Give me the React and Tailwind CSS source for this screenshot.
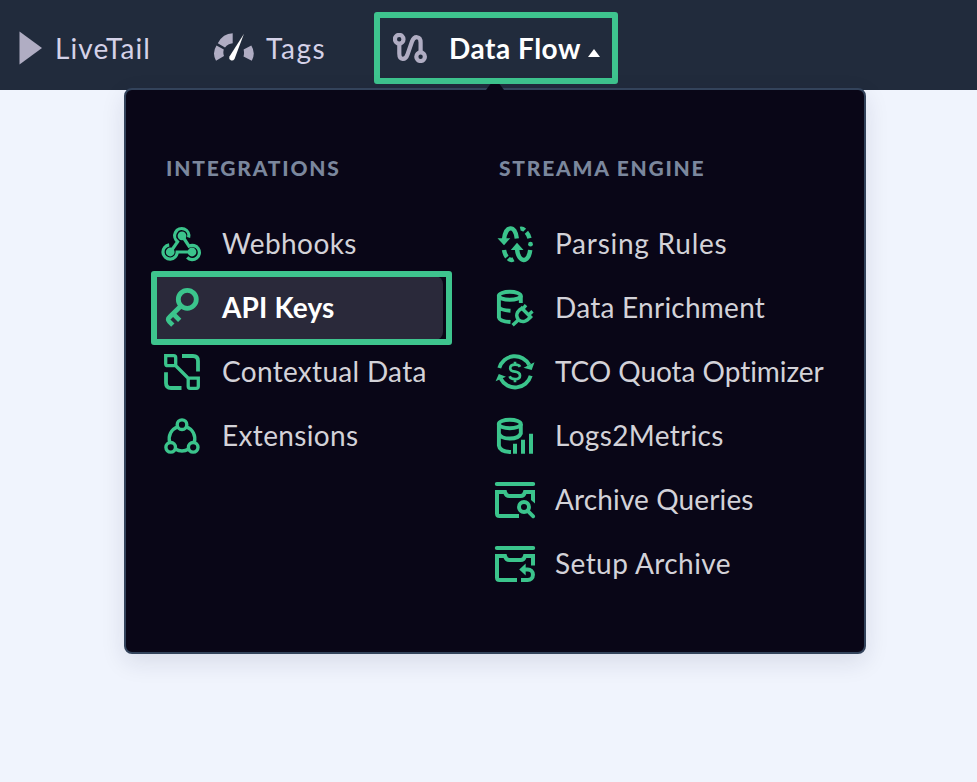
import React from 'react';

function Icon({ children, className = '' }) {
  return (
    <svg
      viewBox="0 0 40 40"
      className={`h-10 w-10 shrink-0 overflow-visible text-[#3bc48c] ${className}`}
      fill="none"
      stroke="currentColor"
      strokeWidth="4"
    >
      {children}
    </svg>
  );
}

const WebhookIcon = () => (
  <Icon>
    <g strokeWidth="3.2">
      <path d="M15.8 17.6A7.1 7.1 0 1 1 26.6 13.5" />
      <path d="M7.2 20.9A7.1 7.1 0 1 0 15.2 28H29" />
      <path d="M20 11.500L27 22.200A7.100 7.100 0 1 1 25.200 33.400" />
      <path d="M16.400 16.600L8.400 28" />
    </g>
    <g fill="currentColor" stroke="none">
      <circle cx="20" cy="11.800" r="4.400" />
      <circle cx="8.200" cy="28" r="4.400" />
      <circle cx="30" cy="28" r="4.400" />
    </g>
  </Icon>
);

const KeyIcon = () => (
  <Icon>
    <circle cx="25.3" cy="11.3" r="9" strokeWidth="4.8" />
    <path d="M18.600 18.200L7.400 29.200Q5 31.400 7.300 33.700L10.800 37.200M11.500 26.200L17.700 32.400" strokeWidth="4.700" />
  </Icon>
);

const ContextIcon = () => (
  <Icon>
    <path
      d="M3.700 3.700H11.700Q13.700 3.700 13.700 5.700V13.700H5.700Q3.700 13.700 3.700 11.700ZM26.200 26.200H36.300V34.300Q36.300 36.300 34.300 36.300H28.200Q26.200 36.300 26.200 34.300ZM13 13L27 27"
      strokeWidth="3.300"
    />
    <path d="M20 4H31Q36 4 36 9V19.500M4 20.300V31Q4 36 9 36H19.500" strokeWidth="3.800" />
  </Icon>
);

const ExtensionsIcon = () => (
  <Icon>
    <g strokeWidth="3.400">
      <circle cx="20" cy="8.700" r="4.800" />
      <circle cx="8.700" cy="31.300" r="4.800" />
      <circle cx="31.200" cy="31.300" r="4.800" />
      <path d="M15.500 10.800A12.800 12.800 0 0 0 7.700 26.300M24.500 10.800A12.800 12.800 0 0 1 32.300 26.300M13.300 33A13 13 0 0 0 26.700 33" />
    </g>
  </Icon>
);

const ParsingIcon = () => (
  <Icon>
    <g strokeWidth="4.400">
      <path d="M9 15.500C10.500 0.800 20.500 0.800 21.800 14.500" />
      <path d="M25.300 4.800Q27.600 4.200 29.600 6.200M31.400 8.300Q33.600 10.800 34.500 14.300" />
      <path d="M9 26Q9.700 30.300 11.900 33.200M13.300 34.500Q15.700 36.800 18.500 35.300" />
      <path d="M22 25C23.300 39.500 33.800 39.500 35.200 26" />
    </g>
    <g fill="currentColor" stroke="none">
      <path d="M2.500 14.200H15.300L9 21.300ZM15.800 25.900L22 18.800L28.500 25.900Z" />
      <circle cx="35.500" cy="20.200" r="2.400" />
    </g>
  </Icon>
);

const EnrichmentIcon = () => (
  <Icon>
    <g strokeWidth="3.900">
      <ellipse cx="14.800" cy="7.800" rx="11" ry="4" />
      <path d="M3.900 7.800V29.500Q4.500 33.300 15.500 34M3.900 19Q5.500 22.300 15.500 22.800M25.800 7.800V15" />
      <path
        d="M25.600 19L36.800 30.200M26.600 20.400C21.300 23.300 20.500 28.300 23.500 31.700C27 35 32.200 33.800 35 28.900M23.300 31.900L17.600 37.300M28.300 20.300L31 17.200M34.300 26.200L37.500 23.300"
        strokeWidth="3.400"
      />
    </g>
  </Icon>
);

const QuotaIcon = () => (
  <Icon>
    <path d="M4.300 16A16.200 16.200 0 0 1 34.300 13M35.700 23.700A16.200 16.200 0 0 1 5.700 26.600" strokeWidth="3.900" />
    <g fill="currentColor" stroke="none">
      <path d="M28.500 15.800L39.500 10.200L36.700 18ZM.600 29.300L3.800 22L11 24.800Z" />
    </g>
    <path
      d="M25 14.800Q24 12.700 20 12.700Q15.200 12.700 15.200 16.200Q15.200 19.100 20 19.700Q25 20.400 25 23.700Q25 27.100 20 27.100Q15.600 27.100 14.600 24.200M20 9.800V13M20 27V30.300"
      strokeWidth="2.700"
    />
  </Icon>
);

const MetricsIcon = () => (
  <Icon>
    <ellipse cx="14.800" cy="8" rx="11" ry="4.200" strokeWidth="3.900" />
    <path d="M3.900 8V29.500Q4.500 35.500 16 36M3.900 17.500Q5.500 22.500 14.800 22.500Q24 22.500 25.800 17.500V8" strokeWidth="3.900" />
    <path d="M20 37.800V27.700M28 37.800V23.700M36 37.800V17.700" />
  </Icon>
);

const ArchiveQueryIcon = () => (
  <Icon>
    <path d="M1.800 4H38.200" strokeLinecap="round" />
    <path d="M38 20V12H30Q28.800 16.700 24.500 16H15.500Q11.200 16.700 10 12H2V33.500Q2 36 4.500 36H24" />
    <path d="M36 18.500H40V23.500L36 20Z" fill="currentColor" stroke="none" />
    <circle cx="29" cy="27" r="5" strokeWidth="3.900" />
    <path d="M32.700 30.800L38.200 36.300" strokeWidth="3.800" strokeLinecap="round" />
  </Icon>
);

const SetupArchiveIcon = () => (
  <Icon>
    <path d="M1.800 4H38.200" strokeLinecap="round" />
    <path d="M38 21.500V12H30Q28.800 16.700 24.500 16H15.500Q11.200 16.700 10 12H2V33.500Q2 36 4.500 36H22" />
    <path d="M29 25.500H32.700A5.200 5.200 0 0 1 32.700 36H26" />
    <path d="M24.200 25.500L30.700 19.600V31.400Z" fill="currentColor" stroke="none" />
  </Icon>
);

const integrations = [
  { label: 'Webhooks', icon: WebhookIcon, tracking: 'tracking-[0.4px]' },
  { label: 'API Keys', icon: KeyIcon, tracking: 'tracking-[0.15px]', active: true },
  { label: 'Contextual Data', icon: ContextIcon, tracking: 'tracking-[0.3px]' },
  { label: 'Extensions', icon: ExtensionsIcon, tracking: 'tracking-[0.35px]' },
];

const engine = [
  { label: 'Parsing Rules', icon: ParsingIcon, tracking: 'tracking-[0.75px]' },
  { label: 'Data Enrichment', icon: EnrichmentIcon, tracking: 'tracking-[0.25px]' },
  { label: 'TCO Quota Optimizer', icon: QuotaIcon, tracking: 'tracking-[-0.05px]' },
  { label: 'Logs2Metrics', icon: MetricsIcon, tracking: 'tracking-[0.33px]' },
  { label: 'Archive Queries', icon: ArchiveQueryIcon, tracking: 'tracking-[0.13px]' },
  { label: 'Setup Archive', icon: SetupArchiveIcon, tracking: 'tracking-[0.43px]' },
];

function MenuItem({ item }) {
  const Glyph = item.icon;
  return (
    <li
      className={`relative flex h-16 items-center gap-5 pl-[9px] whitespace-nowrap ${
        item.active ? 'rounded-lg bg-[#2a293a] font-bold text-white' : 'text-[#d3d2d8]'
      }`}
    >
      <Glyph />
      <span className={`pb-[2px] ${item.tracking}`}>{item.label}</span>
      {item.active && (
        <span className="absolute -top-[5px] -right-[9px] -bottom-[5px] -left-[2px] rounded-[3px] border-[6px] border-[#3ec48e]" />
      )}
    </li>
  );
}

export default function App() {
  return (
    <div className="h-[782px] w-[977px] overflow-hidden bg-[#f0f4fd] font-['Lato',sans-serif] text-[28px] leading-9">
      <header className="relative flex h-[90px] items-center bg-[#212b3c] pb-[5px] pl-[19px] whitespace-nowrap text-[#d5d2e8]">
        <div className="mt-3.5 flex h-[70px] w-[194px] items-center pb-[3px]">
          <svg viewBox="0 0 24 34" className="h-[34px] w-6 shrink-0">
            <path d="M.500 .500L23 17L.500 33.500Z" fill="#b0adc3" />
          </svg>
          <span className="ml-[12px] pb-px tracking-[1.1px]">LiveTail</span>
        </div>
        <div className="mt-3.5 flex h-[70px] w-[161px] items-center pb-[3px]">
          <svg viewBox="0 0 42 34" className="h-[34px] w-[42px] shrink-0">
            <path
              d="M3.500 14.500L10.800 18.500Q9.800 22 11 25L3 29.700Q-1.300 22 3.500 14.500ZM4.800 12.300Q10 2.300 19.700 2.300V12.200Q15 12.700 12 16.400ZM38.300 14.500L30.600 18.500Q31.500 22.500 30.500 25.500L38.800 29.700Q43 22 38.300 14.500Z"
              fill="#b0adc3"
            />
            <path d="M31 2.800L21.500 28Q20 30.300 17.800 29.300Q15.600 28 16.300 25.700Z" fill="white" />
          </svg>
          <span className="ml-[11px] pb-px tracking-[1.6px]">Tags</span>
        </div>
        <div className="mt-[11px] flex h-[72px] w-[244px] items-center rounded-[3px] border-[6px] border-[#3ec48e] pl-[13px] font-bold text-white">
          <svg viewBox="0 0 34 30" className="h-[30px] w-[34px] shrink-0" fill="none" stroke="#b0adc3" strokeWidth="4.200">
            <circle cx="6.200" cy="6.200" r="4.300" />
            <circle cx="27.600" cy="23.700" r="4.300" />
            <path d="M6.300 10V20.500C6.300 27.500 12.500 27.500 14.500 21.500L19 8.500C21.200 2.500 27.600 2.800 27.600 9.500V20" />
          </svg>
          <span className="ml-[22px] pb-px tracking-[0.52px]">Data Flow</span>
          <svg viewBox="0 0 12 8" className="mt-[9px] ml-[7px] h-2 w-3">
            <path d="M6 0L12 8H0Z" fill="white" />
          </svg>
        </div>
        <nav className="absolute top-[88px] left-[124px] z-10 flex h-[566px] w-[742px] rounded-lg border-2 border-[#33435b] bg-[#090617] pt-[62px] pl-[27px] font-normal shadow-[0_8px_24px_rgba(30,25,60,0.11)]">
          <svg viewBox="0 0 18 7" className="absolute -top-[6px] left-[360px] h-[7px] w-[18px]">
            <path d="M0 7V6L4.500 0H13.500L18 6V7Z" fill="#090617" />
          </svg>
          <section className="w-[290px]">
            <h2 className="mb-7 pl-[13px] text-[21px] leading-[32px] font-black tracking-[1.8px] text-[#7b879d]">INTEGRATIONS</h2>
            <ul>
              {integrations.map((item) => (
                <MenuItem key={item.label} item={item} />
              ))}
            </ul>
          </section>
          <section className="ml-[43px] w-[340px]">
            <h2 className="mb-7 pl-[13px] text-[21px] leading-[32px] font-black tracking-[1.75px] text-[#7b879d]">STREAMA ENGINE</h2>
            <ul>
              {engine.map((item) => (
                <MenuItem key={item.label} item={item} />
              ))}
            </ul>
          </section>
        </nav>
      </header>
    </div>
  );
}
